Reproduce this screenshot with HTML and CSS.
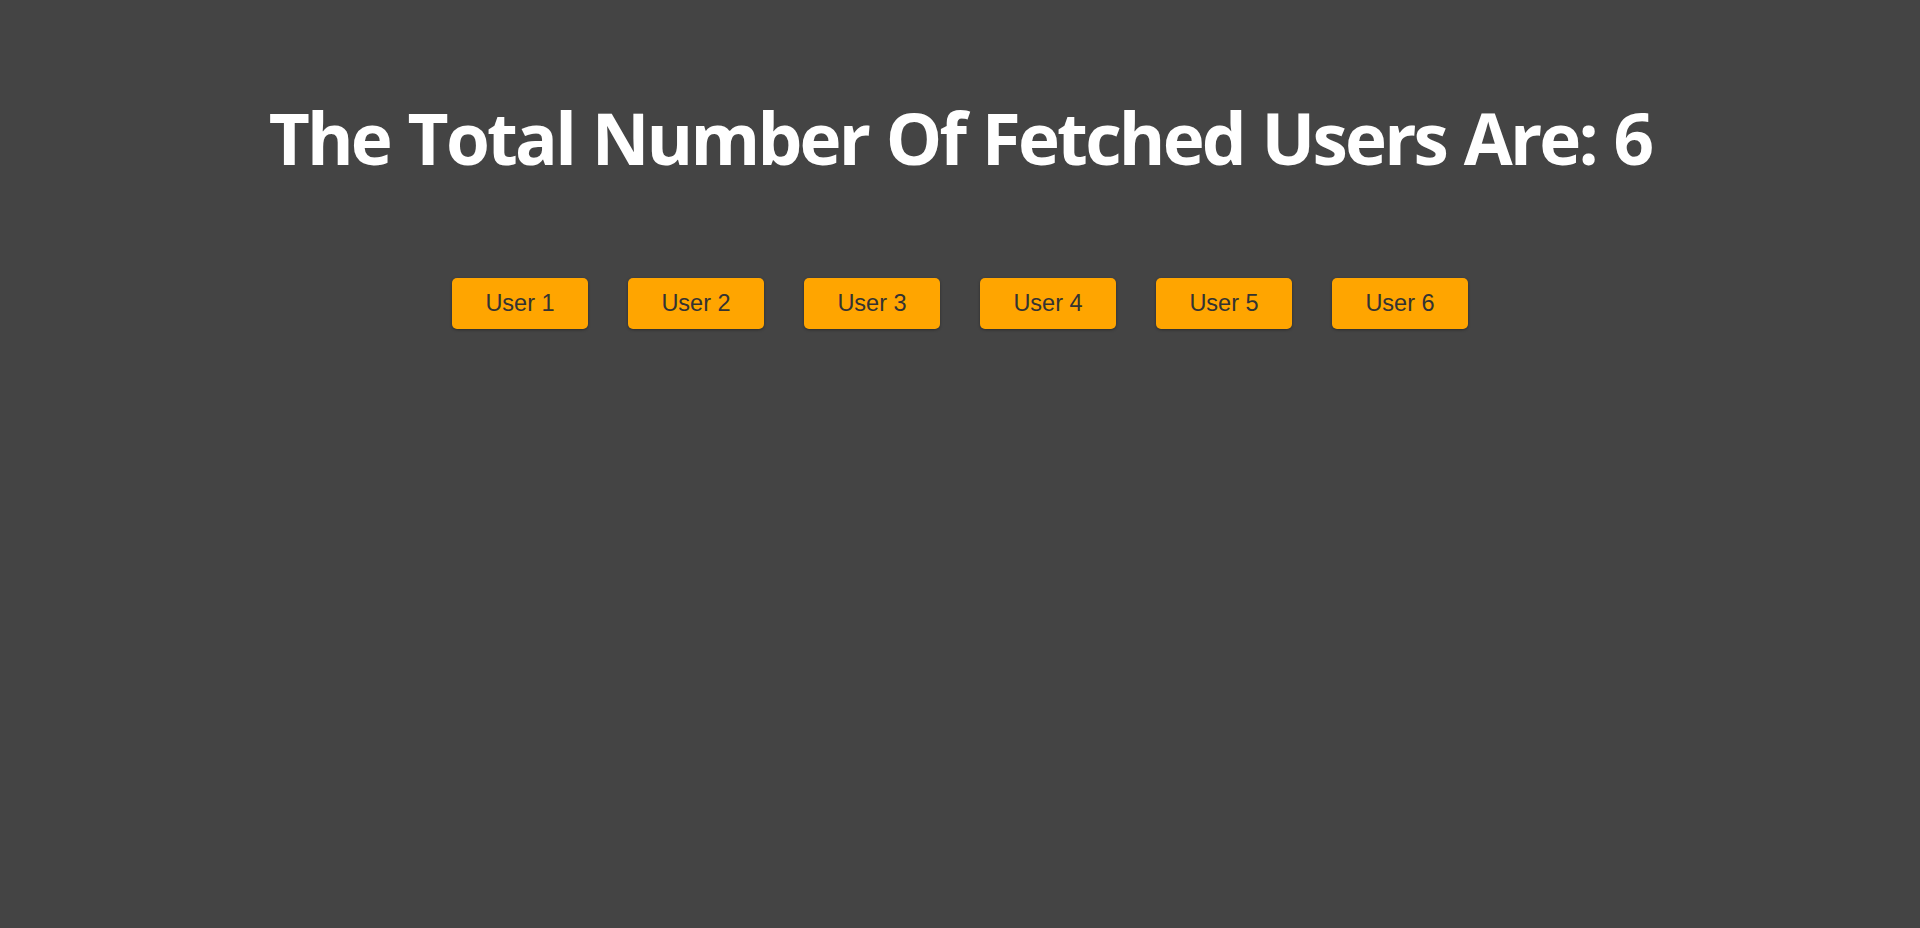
FILE: index.html
```html
<!DOCTYPE html>
<html>
<head>
<meta charset="utf-8">
<link rel="stylesheet" href="styles.css">
</head>
<body>
<div class="app">
  <h1 class="title">The Total Number Of Fetched Users Are: 6</h1>
  <div class="users">
    <button class="user-btn">User 1</button>
    <button class="user-btn">User 2</button>
    <button class="user-btn">User 3</button>
    <button class="user-btn">User 4</button>
    <button class="user-btn">User 5</button>
    <button class="user-btn">User 6</button>
  </div>
</div>
</body>
</html>
```
FILE: styles.css
```css
html, body {
  margin: 0;
  padding: 0;
  background: #444444;
  height: 100%;
}
.app {
  display: flex;
  flex-direction: column;
  align-items: center;
  padding-top: 89px;
}
.title {
  margin: 0;
  font-family: "Open Sans", sans-serif;
  font-weight: 700;
  font-size: 71px;
  line-height: 98px;
  letter-spacing: -2.8px;
  word-spacing: 2px;
  color: #ffffff;
  text-align: center;
}
.users {
  display: flex;
  gap: 40px;
  margin-top: 91px;
}
.user-btn {
  width: 136px;
  height: 51px;
  background: #ffa500;
  border: none;
  border-radius: 5px;
  box-shadow: 0 1px 3px rgba(0,0,0,0.35);
  font-family: "Liberation Sans", Arial, sans-serif;
  font-size: 23.5px;
  color: #333333;
  padding: 0;
}
```
